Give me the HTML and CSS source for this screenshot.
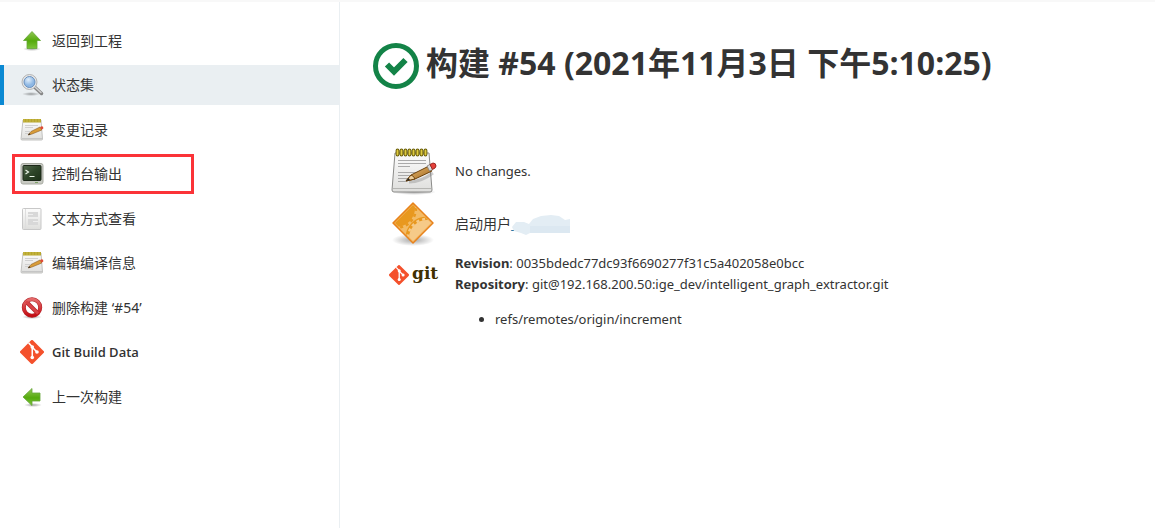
FILE: index.html
```html
<!DOCTYPE html>
<html lang="zh-CN">
<head>
<meta charset="utf-8">
<meta name="viewport" content="width=device-width, initial-scale=1">
<title>构建 #54</title>
<link rel="stylesheet" href="styles.css">
</head>
<body>
<svg class="defs" aria-hidden="true">
  <defs>
    <linearGradient id="green" x1="0" y1="0" x2="0" y2="1"><stop offset="0" stop-color="#91c653"/><stop offset=".55" stop-color="#55aa0c"/><stop offset="1" stop-color="#7cc43a"/></linearGradient>
    <linearGradient id="paper" x1="0" y1="0" x2="0" y2="1"><stop offset="0" stop-color="#fcfcfc"/><stop offset="1" stop-color="#dededc"/></linearGradient>
    <linearGradient id="red" x1="0" y1="0" x2="0" y2="1"><stop offset="0" stop-color="#e46a6a"/><stop offset="1" stop-color="#c40d14"/></linearGradient>
    <linearGradient id="screen" x1="0" y1="0" x2="1" y2="1"><stop offset="0" stop-color="#53694d"/><stop offset=".5" stop-color="#2d4528"/><stop offset="1" stop-color="#1c3018"/></linearGradient>
    <linearGradient id="wood" x1="0" y1="0" x2="1" y2="1"><stop offset="0" stop-color="#ecc177"/><stop offset="1" stop-color="#9f6219"/></linearGradient>
    <radialGradient id="shade"><stop offset="0" stop-color="#000" stop-opacity=".35"/><stop offset="1" stop-color="#000" stop-opacity="0"/></radialGradient>
    <radialGradient id="lens" cx=".4" cy=".3"><stop offset="0" stop-color="#e2effb"/><stop offset="1" stop-color="#8db7e4"/></radialGradient>
    <clipPath id="diamond"><path d="M24 4l20 20-20 20L4 24z"/></clipPath>
    <symbol id="notepad" viewBox="-2 -1 48 48">
      <ellipse cx="23" cy="44" rx="22" ry="3" fill="url(#shade)"/>
      <path d="M4 5h34l3 37q0 2-2 2H3q-2 0-2-2z" fill="url(#paper)" stroke="#8b8b89"/>
      <path d="M2 40.500h38" stroke="#b5b5b2"/>
      <path d="M7 12.500h28M7 15.500h28M7 18.500h12M7 24.500h25M7 27.500h13M7 30.500h10M7 33.500h8" stroke="#aaa"/>
      <path d="M6.500 2.500v4M10.500 2.500v4M14.500 2.500v4M18.500 2.500v4M22.500 2.500v4M26.500 2.500v4M30.500 2.500v4M34.500 2.500v4" stroke="#665b0b" stroke-width="3.800" stroke-linecap="round"/>
      <path d="M6.500 2.500v4M10.500 2.500v4M14.500 2.500v4M18.500 2.500v4M22.500 2.500v4M26.500 2.500v4M30.500 2.500v4M34.500 2.500v4" stroke="#ddc93e" stroke-width="1.900" stroke-linecap="round"/>
      <path d="M18 34q12 0 24-9" fill="none" stroke="#777" stroke-opacity=".35" stroke-width="3"/>
      <path d="M15 33l5-6 18-9 3 5-17 8z" fill="url(#wood)" stroke="#6e430d"/>
      <path d="M15 33l5-6q3 1 4 4z" fill="#edcf9e" stroke="#6e430d"/>
      <path d="M15 33l2.500-3 1.500 2z" fill="#222"/>
      <path d="M36 18l3-1.500 2.500 5-3 1.500z" fill="#ddd" stroke="#777" stroke-width=".7"/>
      <path d="M39 16.500l3-1.500q3 0 3 3 0 2-3.500 3.500z" fill="#e5413b" stroke="#9d2824"/>
    </symbol>
    <symbol id="notepad-small" viewBox="0 0 24 24">
      <path d="M3 2h18l1.500 19q0 1-1 1H2q-1 0-1-1z" fill="url(#paper)" stroke="#b5b5b2" stroke-width=".8"/>
      <path d="M2 20.500h20" stroke="#c5c5c5"/>
      <path d="M3 1h18v3.500H3z" fill="#b7a62c"/>
      <path d="M4 1v3M7 1v3M10 1v3M13 1v3M16 1v3M19 1v3" stroke="#cabb4d" stroke-width="1"/>
      <path d="M5 7.500h13M5 9.500h8M5 13.500h5M5 15.500h4" stroke="#d0d0d0"/>
      <path d="M8 17l3-3.500 9-4.500 1.800 3-9.800 4z" fill="#d99d38" stroke="#8d5c25" stroke-width=".6"/>
      <path d="M8 17l1.500-1.800 1 1.300z" fill="#222"/>
      <path d="M20 9l1.800-.8q1.800 0 1.500 2.300l-1.800 1.200z" fill="#df4a35"/>
    </symbol>
    <symbol id="git-mark" viewBox="0 0 92 92">
      <path d="M90.200 41.800L50.200 1.800a6 6 0 0 0-8.400 0L1.800 41.800a6 6 0 0 0 0 8.400l40 40a6 6 0 0 0 8.400 0l40-40a6 6 0 0 0 0-8.400z" fill="#f4512c"/>
      <path d="M33 11l14 15v41M47 28l18 18" fill="none" stroke="#fff" stroke-width="6"/>
      <circle cx="47" cy="27" r="7" fill="#fff"/><circle cx="47" cy="67" r="7" fill="#fff"/><circle cx="65" cy="46" r="7" fill="#fff"/>
    </symbol>
  </defs>
</svg>
<div class="page">
  <nav class="sidebar" aria-label="任务">
    <ul class="tasks">
      <li><a class="task" href="#project"><svg class="task-icon" viewBox="0 0 24 24"><ellipse cx="12" cy="20" rx="9" ry="2" fill="url(#shade)"/><path d="M12 2.500l8.500 9H17v8H7v-8H3.500z" fill="url(#green)" stroke="#64a637" stroke-width=".8"/></svg><span class="task-label">返回到工程</span></a></li>
      <li><a class="task task-active" href="#status" aria-current="page"><svg class="task-icon" viewBox="0 0 24 24"><ellipse cx="11" cy="21" rx="9" ry="2" fill="url(#shade)"/><path d="M14.500 14l7 6.500" stroke="#858585" stroke-width="3.500" stroke-linecap="round"/><path d="M15 14l6 5.500" stroke="#d0d0d0" stroke-width="1.500" stroke-linecap="round"/><circle cx="9.500" cy="9" r="7.500" fill="#e7e7e7" stroke="#a5a5a5" stroke-width=".8"/><circle cx="9.500" cy="9" r="5.500" fill="url(#lens)" stroke="#6b91bd"/></svg><span class="task-label">状态集</span></a></li>
      <li><a class="task" href="#changes"><svg class="task-icon"><use href="#notepad-small"/></svg><span class="task-label">变更记录</span></a></li>
      <li><a class="task task-marked" href="#console"><svg class="task-icon" viewBox="0 0 24 24"><rect x="1" y="1.500" width="22" height="20.500" rx="2" fill="#c8cac3" stroke="#a8aba2"/><rect x="3" y="3.500" width="18" height="15" rx="1" fill="url(#screen)" stroke="#1c2819"/><path d="M5.500 8l3 2-3 2M9.500 14.500h5" fill="none" stroke="#e9f4e5" stroke-width="1.200"/><path d="M15 20.500h3" stroke="#7da266"/></svg><span class="task-label">控制台输出</span></a></li>
      <li><a class="task" href="#text"><svg class="task-icon" viewBox="0 0 24 24"><rect x="2.500" y="1.500" width="18.500" height="21" rx="1" fill="url(#paper)" stroke="#c8c8c8"/><path d="M5.500 2v20" stroke="#dedede"/><path d="M8 5h10v5H8zM8 12h10v6H8z" fill="#d8d8d8"/><path d="M8 7.500h5M13 14.500h5" stroke="#eee"/></svg><span class="task-label">文本方式查看</span></a></li>
      <li><a class="task" href="#edit"><svg class="task-icon"><use href="#notepad-small"/></svg><span class="task-label">编辑编译信息</span></a></li>
      <li><a class="task" href="#delete"><svg class="task-icon" viewBox="0 0 24 24"><ellipse cx="12" cy="21" rx="10" ry="2" fill="url(#shade)"/><circle cx="12" cy="11.500" r="8.200" fill="#fff" stroke="#b12328" stroke-width="4"/><path d="M6.500 6l11 11" stroke="#b12328" stroke-width="4"/><circle cx="12" cy="11.500" r="8.200" fill="none" stroke="url(#red)" stroke-width="3"/><path d="M6 5.500l12 12" stroke="#d84347" stroke-width="2.600"/></svg><span class="task-label">删除构建 ‘#54’</span></a></li>
      <li><a class="task task-latin" href="#git"><svg class="task-icon"><use href="#git-mark"/></svg><span>Git Build Data</span></a></li>
      <li><a class="task" href="#previous"><svg class="task-icon" viewBox="0 0 24 24"><ellipse cx="13" cy="20" rx="9" ry="2" fill="url(#shade)"/><path d="M3 12l9-8.500V8h8v8h-8v4.500z" fill="url(#green)" stroke="#64a637" stroke-width=".8"/></svg><span class="task-label">上一次构建</span></a></li>
    </ul>
  </nav>
  <main class="content">
    <h1 class="title">
      <svg class="status-icon" viewBox="0 0 48 48" role="img" aria-label="成功"><circle cx="24" cy="24" r="20.500" fill="none" stroke="#138347" stroke-width="5"/><path d="M15 22.500l7 7L33.500 18" fill="none" stroke="#138347" stroke-width="6"/></svg>
      <span class="title-text">构建 #54 (2021年11月3日 下午5:10:25)</span>
    </h1>
    <div class="summary">
      <section class="row">
        <svg class="row-icon"><use href="#notepad"/></svg>
        <p class="row-text">No changes.</p>
      </section>
      <section class="row">
        <svg class="row-icon" viewBox="0 0 48 48"><ellipse cx="24" cy="41" rx="21" ry="6" fill="url(#shade)"/><g clip-path="url(#diamond)"><path d="M24 4l20 20-20 20L4 24z" fill="#f3bb66"/><circle cx="7" cy="9" r="19" fill="#e8981f"/><circle cx="7" cy="9" r="20" fill="none" stroke="#e8981f" stroke-width="2.500" stroke-dasharray="3 3"/><circle cx="38" cy="39" r="19" fill="none" stroke="#e8981f" stroke-width="5"/><circle cx="38" cy="39" r="18" fill="#f6ca88"/><circle cx="38" cy="39" r="19" fill="none" stroke="#f6ca88" stroke-width="2.500" stroke-dasharray="3 3"/></g><path d="M24 5.500L42.500 24 24 42.500 5.500 24z" fill="none" stroke="#f4b762"/><path d="M24 4l20 20-20 20L4 24z" fill="none" stroke="#e8821b" stroke-width="1.500" stroke-linejoin="round"/></svg>
        <p class="row-text row-text-cjk">启动用户<a class="user" href="#user" aria-label="用户">_<svg class="smudge" viewBox="0 0 58 20" aria-hidden="true"><path d="M0 12L4 7l8 0 5 2 4-5 8-3 10-1 8 1 6 4 5-1v14H18l-4 2-5-2-7-2z" fill="#e3edf4"/><path d="M18 11h40v7H18z" fill="#dce8f1"/></svg></a></p>
      </section>
      <section class="row row-top">
        <div class="git-logo"><svg class="git-logo-mark" aria-hidden="true"><use href="#git-mark"/></svg><span class="git-word">git</span></div>
        <div class="row-text revision">
          <div><b>Revision</b>: 0035bdedc77dc93f6690277f31c5a402058e0bcc</div>
          <div><b>Repository</b>: git@192.168.200.50:ige_dev/intelligent_graph_extractor.git</div>
          <ul class="refs"><li>refs/remotes/origin/increment</li></ul>
        </div>
      </section>
    </div>
  </main>
</div>
</body>
</html>
```
FILE: styles.css
```css
*, *::after { box-sizing: border-box; }
body {
  margin: 0;
  background: #fff;
  color: #333;
  font: 13px/21px "Noto Sans", "Noto Sans CJK SC", sans-serif;
}
.defs { position: absolute; width: 0; height: 0; }
.page {
  display: flex;
  min-height: 100vh;
  border-top: 2px solid #f8f8f8;
}
.sidebar {
  flex: 0 0 340px;
  padding-top: 19px;
  border-right: 1px solid #eaeff2;
}
.tasks { margin: 0; padding: 0; list-style: none; }
.tasks li { margin-bottom: 4px; }
.tasks li:nth-child(even) { margin-bottom: 5px; }
.task {
  position: relative;
  display: flex;
  align-items: center;
  gap: 8px;
  height: 40px;
  padding-left: 20px;
  color: #333;
  font-size: 14px;
  text-decoration: none;
}
.task-label { padding-bottom: 2px; }
.task-active { padding-left: 16px; border-left: 4px solid #0b89d3; background: #eaeff2; }
.task-latin { font-family: "Open Sans", sans-serif; font-size: 13px; font-weight: 600; }
.task-marked::after {
  content: "";
  position: absolute;
  inset: 0 auto 0 12px;
  width: 182px;
  border: 3px solid #fb3338;
}
.task-icon { flex: none; width: 24px; height: 24px; }
.content { flex: 1; min-width: 0; padding: 40px 32px; }
.title {
  display: flex;
  align-items: center;
  gap: 6px;
  margin: 0;
  font: 700 32px/42px "Open Sans", "Noto Sans CJK SC", sans-serif;
}
.title-text { padding-bottom: 6px; }
.status-icon { flex: none; width: 48px; height: 48px; }
.summary {
  display: grid;
  gap: 4px;
  padding: 57px 0 0 17px;
}
.row { display: flex; align-items: center; gap: 18px; }
.row-top { align-items: flex-start; }
.row-icon { flex: none; width: 48px; height: 48px; }
.row-text { margin: 0; font-size: 13px; line-height: 21px; }
.row-text-cjk { font-size: 14px; }
.revision { padding-top: 2px; }
.user { position: relative; color: #2878a8; text-decoration: none; }
.smudge { position: absolute; left: 1px; top: 1px; width: 58px; height: 20px; }
.git-logo {
  display: flex;
  align-items: center;
  gap: 3px;
  width: 48px;
  height: 48px;
}
.git-logo-mark { flex: none; width: 20px; height: 20px; }
.git-word { padding-bottom: 4px; color: #413000; font: 700 17px/24px "DejaVu Serif", serif; }
.refs { margin: 14px 0; padding-left: 40px; }
```
